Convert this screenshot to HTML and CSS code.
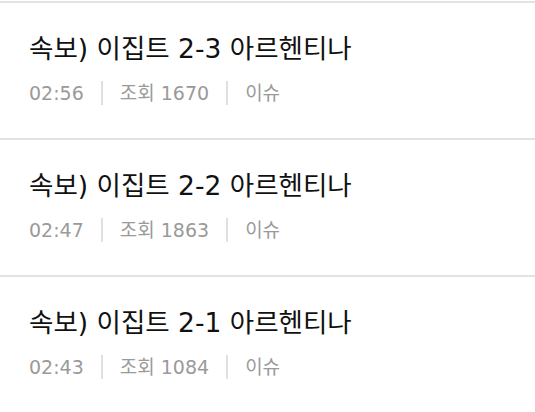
FILE: index.html
```html
<!DOCTYPE html>
<html lang="ko">
<head>
<meta charset="utf-8">
<title>속보 목록</title>
<link rel="stylesheet" href="styles.css">
</head>
<body>
<ul class="list">
	<li class="item">
		<p class="title">속보) 이집트 2-3 아르헨티나</p>
		<p class="meta"><span>02:56</span><span>조회 1670</span><span>이슈</span></p>
	</li>
	<li class="item">
		<p class="title">속보) 이집트 2-2 아르헨티나</p>
		<p class="meta"><span>02:47</span><span>조회 1863</span><span>이슈</span></p>
	</li>
	<li class="item">
		<p class="title">속보) 이집트 2-1 아르헨티나</p>
		<p class="meta"><span>02:43</span><span>조회 1084</span><span>이슈</span></p>
	</li>
</ul>
</body>
</html>
```

FILE: styles.css
```css
body
{
	margin:0;
	padding-top:1px;
	background:#fff;
	font-family:"DejaVu Sans", "Noto Sans CJK KR", sans-serif;
}
.list
{
	list-style:none;
	margin:0;
	padding:0;
}
.item
{
	border-top:2px solid #e2e2e2;
	height:107px;
	padding:28px 29px 0;
}
.title
{
	margin:0;
	font-size:26.5px;
	line-height:36px;
	color:#111;
}
.meta
{
	margin:14px 0 0;
	display:flex;
	align-items:center;
	font-size:19px;
	line-height:24px;
	color:#9a9a9a;
}
.meta span + span
{
	border-left:2px solid #e0e0e0;
	margin-left:17px;
	padding-left:17px;
}
```
